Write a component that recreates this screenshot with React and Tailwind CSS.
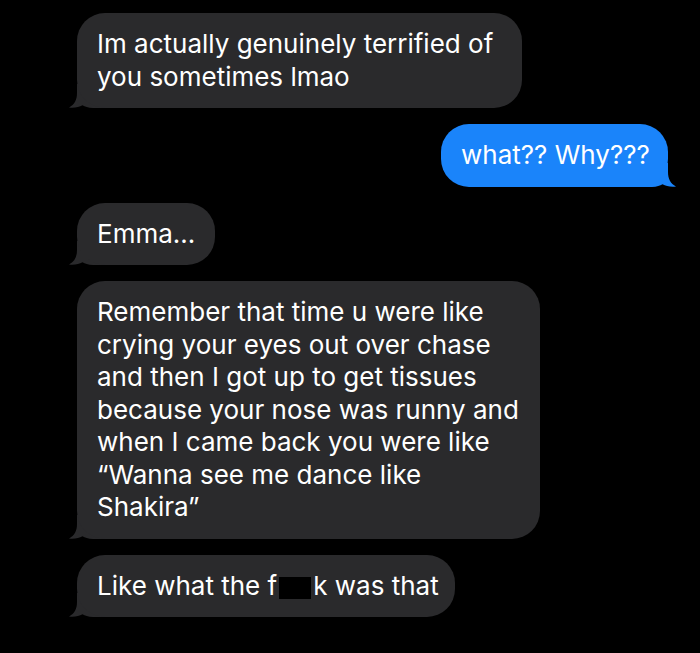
import React from "react";

const GRAY = "#2a2a2c";
const BLUE = "#1a84fa";

function TailLeft() {
  return (
    <svg
      className="absolute bottom-0 left-[-8px]"
      width="40"
      height="24"
      viewBox="0 0 40 24"
      aria-hidden
    >
      <path d="M8 0 L8 9 C8 16 5.5 20.5 0 23.5 C6 24.2 10 22.8 13.5 21.2 C16 22.7 19 23.6 24 24 L40 24 L40 0 Z" fill={GRAY} />
    </svg>
  );
}

function TailRight() {
  return (
    <svg
      className="absolute bottom-0 right-[-8px]"
      width="40"
      height="24"
      viewBox="0 0 40 24"
      aria-hidden
    >
      <path d="M32 0 L32 9 C32 16 34.5 20.5 40 23.5 C34 24.2 30 22.8 26.5 21.2 C24 22.7 21 23.6 16 24 L0 24 L0 0 Z" fill={BLUE} />
    </svg>
  );
}

function Incoming({ width, children }) {
  return (
    <div className="relative self-start" style={{ width }}>
      <TailLeft />
      <div className="relative whitespace-nowrap rounded-[28px] bg-[#2a2a2c] px-5 py-[15px] text-[26px] leading-[32.5px] text-white">
        {children}
      </div>
    </div>
  );
}

function Outgoing({ width, children }) {
  return (
    <div className="relative self-end" style={{ width }}>
      <TailRight />
      <div className="relative whitespace-nowrap rounded-[28px] bg-[#1a84fa] px-5 py-[15px] text-[26px] leading-[32.5px] text-white">
        {children}
      </div>
    </div>
  );
}

export default function App() {
  return (
    <div
      className="h-[653px] w-[700px] overflow-hidden bg-black pl-[77px] pr-[32px] pt-[13px]"
      style={{ fontFamily: "Inter, 'Liberation Sans', sans-serif" }}
    >
      <div className="flex flex-col gap-[16px]">
        <Incoming width={445}>
          Im actually genuinely terrified of
          <br />
          you sometimes lmao
        </Incoming>
        <Outgoing width={227}>what?? Why???</Outgoing>
        <Incoming width={138}>Emma...</Incoming>
        <Incoming width={463}>
          Remember that time u were like
          <br />
          crying your eyes out over chase
          <br />
          and then I got up to get tissues
          <br />
          because your nose was runny and
          <br />
          when I came back you were like
          <br />
          “Wanna see me dance like
          <br />
          Shakira”
        </Incoming>
        <Incoming width={378}>
          Like what the f
          <span className="mx-[2px] inline-block h-[22px] w-[32px] bg-black align-[-4px]" />
          k was that
        </Incoming>
      </div>
    </div>
  );
}
